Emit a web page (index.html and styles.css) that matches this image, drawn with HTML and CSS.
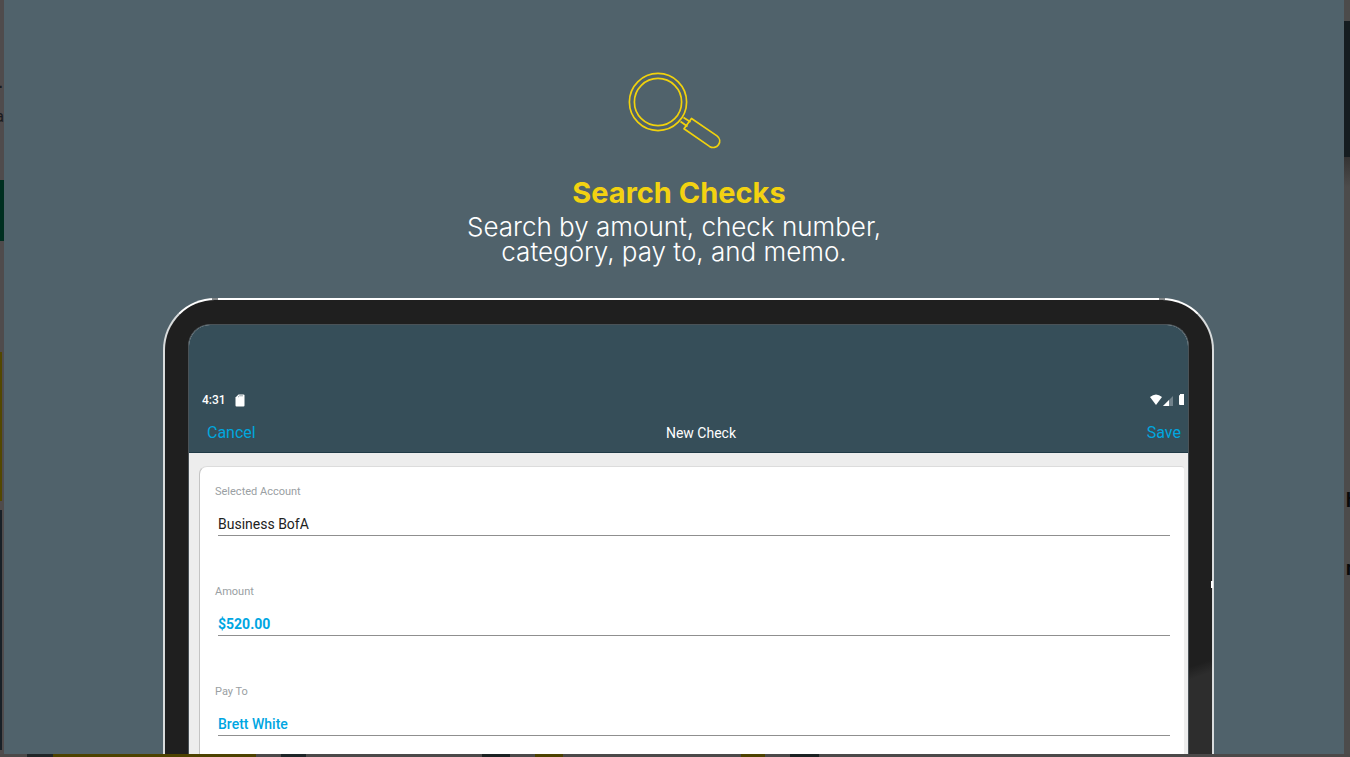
FILE: index.html
```html
<!DOCTYPE html>
<html lang="en">
<head>
<meta charset="utf-8">
<meta name="viewport" content="width=device-width, initial-scale=1">
<title>Search Checks</title>
<link rel="stylesheet" href="styles.css">
</head>
<body>
<div class="page">
  <div class="edge edge-left" aria-hidden="true">
    <span class="scrap scrap-dash">-</span>
    <span class="scrap scrap-a">a</span>
  </div>
  <main class="slide">
    <header class="intro">
      <svg class="glass" viewBox="0 0 94 78" fill="none" stroke="#f1d20c" stroke-width="1.7" aria-hidden="true">
        <circle cx="31" cy="31" r="28.6"/>
        <circle cx="31" cy="31" r="23.6"/>
        <path d="M56.500 46.500l7 4.500M53.500 50.500l7 5"/>
        <path d="M64.500 47.500L57 57.800l25.500 17.600c3.200 1.900 7.100 1.300 9-1.600 2-3 1.500-6.700-1.500-8.900z" stroke-linejoin="round"/>
      </svg>
      <h1 class="title">Search Checks</h1>
      <p class="lead">Search by amount, check number,<br>category, pay to, and memo.</p>
    </header>
    <section class="device">
      <i class="seam seam-left"></i><i class="seam seam-right"></i><i class="seam seam-side"></i>
      <div class="screen">
        <div class="appbar">
          <div class="status">
            <span class="clock">4:31</span>
            <svg class="sd" viewBox="0 0 10 13" aria-hidden="true"><path d="M3.500.500H8.500Q9.500.500 9.500 1.500V11.500Q9.500 12.500 8.500 12.500H1.500Q.500 12.500.500 11.500V3.500z" fill="#fff"/><path d="M3 3.200L4.500 1.800H8" stroke="#98a4aa" fill="none"/></svg>
            <svg class="signals" viewBox="0 0 35 12" aria-hidden="true"><path d="M0 3Q6 -2 12 3L6 11z" fill="#fff"/><path d="M13 12L23 2V12z" fill="#71828b"/><path d="M13 12L19 6V12z" fill="#fff"/><path d="M29 2Q29 1 30 1V0H34V11H30Q29 11 29 10z" fill="#fff"/></svg>
          </div>
          <nav class="actions">
            <button class="action" type="button">Cancel</button>
            <h2 class="heading">New Check</h2>
            <button class="action action-save" type="button">Save</button>
          </nav>
        </div>
        <form class="card">
          <div class="field">
            <label class="label" for="account">Selected Account</label>
            <input class="input" id="account" type="text" value="Business BofA">
          </div>
          <div class="field">
            <label class="label" for="amount">Amount</label>
            <input class="input input-amount" id="amount" type="text" value="$520.00">
          </div>
          <div class="field">
            <label class="label" for="payto">Pay To</label>
            <input class="input input-payee" id="payto" type="text" value="Brett White">
          </div>
        </form>
      </div>
    </section>
  </main>
  <div class="edge edge-right" aria-hidden="true">
    <span class="scrap scrap-h">h</span>
    <span class="scrap scrap-n">n</span>
  </div>
  <div class="edge edge-bottom" aria-hidden="true"></div>
</div>
</body>
</html>
```
FILE: styles.css
```css
* {
  box-sizing: border-box;
}

body {
  margin: 0;
  background: #4b4949;
  font-family: Roboto, "Liberation Sans", sans-serif;
}

.page {
  display: grid;
  grid-template-columns: 4px 1fr 6px;
  grid-template-rows: 1fr 3px;
  height: 100vh;
  overflow: hidden;
}

.edge {
  position: relative;
  overflow: hidden;
}

.edge-left {
  background:
    linear-gradient(#524700, #524700) 0 352px / 2px 149px no-repeat,
    linear-gradient(#182027, #182027) 0 510px / 2px 240px no-repeat,
    linear-gradient(#002f20, #002f20) 0 180px / 4px 61px no-repeat,
    #4f4b4c;
}

.edge-right {
  background:
    linear-gradient(#151c20, #151c20) 0 21px / 6px 136px no-repeat,
    linear-gradient(#343333, #4c4b4b) 0 157px / 6px 30px no-repeat,
    #4c4b4b;
}

.edge-bottom {
  grid-column: 1 / -1;
  background:
    linear-gradient(#202527, #202527) 27px 0 / 26px 3px no-repeat,
    linear-gradient(#4d4200, #4d4200) 53px 0 / 203px 3px no-repeat,
    linear-gradient(#1e2528, #1e2528) 281px 0 / 25px 3px no-repeat,
    linear-gradient(#1b2122, #1b2122) 482px 0 / 28px 3px no-repeat,
    linear-gradient(#4d4200, #4d4200) 535px 0 / 28px 3px no-repeat,
    linear-gradient(#4d4200, #4d4200) 741px 0 / 24px 3px no-repeat,
    linear-gradient(#1b2122, #1b2122) 790px 0 / 29px 3px no-repeat,
    #4b4949;
}

.scrap {
  position: absolute;
  line-height: 20px;
  color: #1b1b1e;
}

.scrap-dash {
  top: 76px;
  right: 1px;
  font-size: 20px;
  font-weight: 700;
}

.scrap-a {
  top: 107px;
  right: 0;
  font-size: 16px;
}

.scrap-h,
.scrap-n {
  left: 2px;
  font-size: 20px;
  font-weight: 700;
  color: #0a0a0a;
}

.scrap-h {
  top: 490px;
}

.scrap-n {
  top: 558px;
}

.slide {
  display: flex;
  flex-direction: column;
  min-height: 0;
  overflow: hidden;
  background: #50626b;
}

.intro {
  display: flex;
  flex-direction: column;
  align-items: center;
  padding-top: 71px;
  text-align: center;
}

.glass {
  width: 94px;
  height: 78px;
}

.title {
  margin: 24px 0 0;
  padding-left: 10px;
  color: #f3d211;
  font: 700 29px/40px Inter, sans-serif;
}

.lead {
  margin: 1px 0 0;
  color: #fff;
  font: 300 26px/25px Inter, sans-serif;
}

.device {
  position: relative;
  flex: 1 0 auto;
  margin: 34px 130px 0 159px;
  padding: 24px 23px 0;
  border: 2px solid #d9dcdd;
  border-top-color: #fff;
  border-bottom: 0;
  border-radius: 52px 52px 0 0;
  background:
    linear-gradient(160deg, #1f1f1f 12px, #2d2d2d 24px) right 355px / 24px 300px no-repeat,
    #1f1f1f;
}

.seam {
  position: absolute;
  top: -2px;
  width: 6px;
  height: 2px;
  background: #85898b;
}

.seam-left {
  left: 47px;
}

.seam-right {
  right: 47px;
}

.seam-side {
  top: 281px;
  right: -1px;
  width: 2px;
  height: 7px;
  background: #fff;
}

.screen {
  overflow: hidden;
  border: 1px solid #4a5257;
  border-width: 1px 1px 0;
  border-radius: 22px 22px 0 0;
  background: #ededed;
}

.appbar {
  padding-top: 64px;
  border-bottom: 1px solid #203a46;
  background: #364e59;
  color: #fff;
}

.status {
  display: flex;
  align-items: center;
  gap: 9px;
  height: 22px;
  padding: 0 3px 0 13px;
}

.clock {
  font-size: 12px;
  font-weight: 500;
}

.sd {
  width: 10px;
  height: 13px;
}

.signals {
  width: 35px;
  height: 12px;
  margin-left: auto;
}

.actions {
  display: grid;
  grid-template-columns: 1fr auto 1fr;
  align-items: center;
  height: 41px;
  padding: 2px 7px 0 18px;
}

.action {
  justify-self: start;
  padding: 0;
  border: 0;
  background: none;
  color: #00a6df;
  font: 400 16px/20px Roboto, sans-serif;
}

.action-save {
  justify-self: end;
}

.heading {
  margin: 0;
  padding-left: 14px;
  font-size: 14px;
  font-weight: 400;
  line-height: 20px;
}

.card {
  display: grid;
  gap: 48px;
  margin: 13px 4px 0 10px;
  padding: 17px 14px 48px 15px;
  border-left: 1px solid #c4c4c4;
  border-top: 1px solid #dcdcdc;
  border-radius: 8px 3px 0 0;
  background: #fff;
}

.label {
  display: block;
  color: #9aa0a3;
  font-size: 11px;
  line-height: 16px;
}

.input {
  display: block;
  width: calc(100% - 3px);
  height: 28px;
  margin: 8px 0 0 3px;
  padding: 5px 0 0;
  border: 0;
  border-bottom: 1px solid #8f8f8f;
  border-radius: 0;
  background: none;
  color: #222;
  font: 400 14px/20px Roboto, sans-serif;
}

.input-amount {
  color: #00a6e2;
  font-weight: 700;
}

.input-payee {
  color: #00a6e2;
  font-weight: 500;
}
```
